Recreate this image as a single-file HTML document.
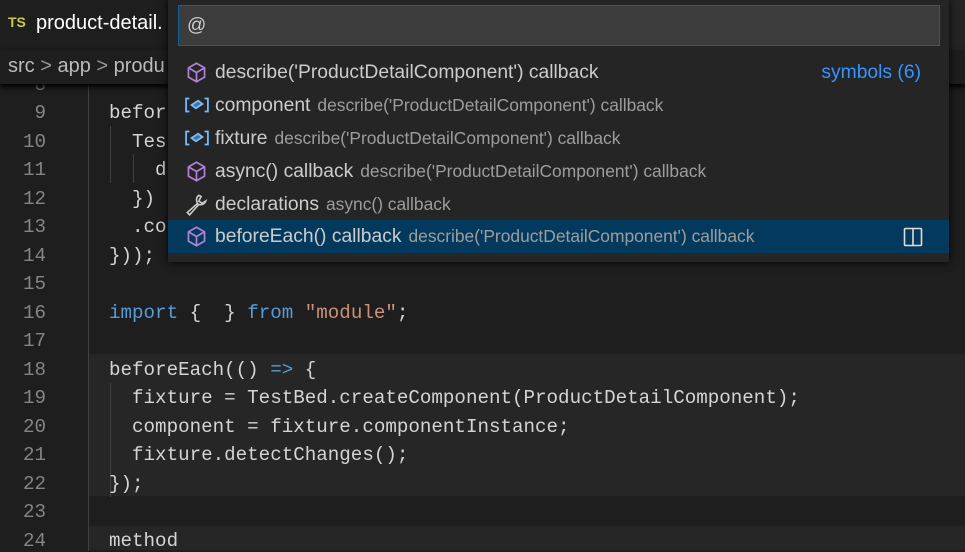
<!DOCTYPE html>
<html><head><meta charset="utf-8"><style>
*{margin:0;padding:0;box-sizing:border-box}
body{width:965px;height:550px;background:#1e1e1e;overflow:hidden;position:relative;font-family:"Liberation Sans",sans-serif}
.top{position:absolute;left:0;top:0;width:965px;height:50px;background:#252526}
.tab{position:absolute;left:0;top:0;width:175px;height:50px;background:#1e1e1e}
.ts{position:absolute;left:8px;top:14px;color:#cbcb41;font-weight:bold;font-size:14px}
.tabname{position:absolute;left:36px;top:12px;color:#fff;font-size:20px}
.bc{position:absolute;left:0;top:50px;width:965px;height:34px;background:#1e1e1e;box-shadow:0 3px 5px #000;color:#bbb;font-size:20px;padding:5px 0 0 8px;z-index:1}
.code{position:absolute;left:0;top:1px;width:965px;font-family:"Liberation Mono",monospace;font-size:19.2px;color:#d4d4d4}
.ln{position:absolute;left:0;width:46px;text-align:right;color:#858585}
.tx{position:absolute;left:109px;white-space:pre}
.cur{position:absolute;left:88px;width:877px;background:#262626}
.guide{position:absolute;left:88px;width:1px;background:#404040}
.k{color:#569cd6}.s{color:#ce9178}
.qp{position:absolute;left:168px;top:0;width:781px;height:262px;background:#252526;box-shadow:0 0 8px #000;z-index:5}
.inp{position:absolute;left:10px;top:5px;width:762px;height:41px;background:#3c3c3c;border:1px solid #0e639c;color:#ccc;font-size:19px;padding:9px 0 0 8px}
.row{position:absolute;left:0;width:781px;height:33px;font-size:19.3px;color:#ccc;line-height:33px}
.row .ic{position:absolute;left:17px;top:5px}
.row .lb{position:absolute;left:47px;white-space:nowrap}
.row .d{color:#9d9d9d;font-size:17.4px;margin-left:7px}
.sel{background:#04395e}
</style></head><body>
<div class="top"><div class="tab"><span class="ts">TS</span><span class="tabname">product-detail.</span></div></div>
<div class="bc">src <span style="color:#999">&gt;</span> app <span style="color:#999">&gt;</span> produ</div>
<div class="code">
<div class="cur" style="top:353px;height:142px"></div>
<div class="cur" style="top:525px;height:24px"></div>
<div class="guide" style="top:82px;height:468px"></div>
<div class="guide" style="left:110px;top:125px;height:57px"></div>
<div class="guide" style="left:110px;top:382px;height:114px"></div>
<div class="guide" style="left:133px;top:153px;height:29px"></div>
<div class="ln" style="top:73px">8</div>
<div class="ln" style="top:101px">9</div><div class="tx" style="top:101px">befor</div>
<div class="ln" style="top:130px">10</div><div class="tx" style="top:130px">  Tes</div>
<div class="ln" style="top:158px">11</div><div class="tx" style="top:158px">    d</div>
<div class="ln" style="top:187px">12</div><div class="tx" style="top:187px">  })</div>
<div class="ln" style="top:215px">13</div><div class="tx" style="top:215px">  .co</div>
<div class="ln" style="top:244px">14</div><div class="tx" style="top:244px">}));</div>
<div class="ln" style="top:272px">15</div>
<div class="ln" style="top:301px">16</div><div class="tx" style="top:301px"><span class="k">import</span> {  } <span class="k">from</span> <span class="s">"module"</span>;</div>
<div class="ln" style="top:329px">17</div>
<div class="ln" style="top:358px">18</div><div class="tx" style="top:358px">beforeEach(() <span class="k">=&gt;</span> {</div>
<div class="ln" style="top:386px">19</div><div class="tx" style="top:386px">  fixture = TestBed.createComponent(ProductDetailComponent);</div>
<div class="ln" style="top:415px">20</div><div class="tx" style="top:415px">  component = fixture.componentInstance;</div>
<div class="ln" style="top:443px">21</div><div class="tx" style="top:443px">  fixture.detectChanges();</div>
<div class="ln" style="top:472px">22</div><div class="tx" style="top:472px">});</div>
<div class="ln" style="top:500px">23</div>
<div class="ln" style="top:529px">24</div><div class="tx" style="top:529px">method</div>
</div>
<div class="qp">
<div class="inp">@</div>
<div class="row" style="top:56px"><svg class="ic" width="23" height="23" viewBox="0 0 20 20" fill="none" stroke="#b180d7" stroke-width="1.5"><path d="M10 2L17 6V14L10 18L3 14V6Z M3 6L10 10L17 6 M10 10V18"/></svg><span class="lb">describe('ProductDetailComponent') callback</span><span style="position:absolute;right:28px;color:#3794ff">symbols (6)</span></div>
<div class="row" style="top:89px"><svg class="ic" width="24" height="22" viewBox="0 0 22 20" fill="none" stroke="#75beff" stroke-width="1.6"><path d="M4 4H1V16H4 M18 4H21V16H18"/><path d="M6 10L12 6L16 9L10 13Z" fill="#75beff" fill-opacity=".5"/></svg><span class="lb">component<span class="d">describe('ProductDetailComponent') callback</span></span></div>
<div class="row" style="top:122px"><svg class="ic" width="24" height="22" viewBox="0 0 22 20" fill="none" stroke="#75beff" stroke-width="1.6"><path d="M4 4H1V16H4 M18 4H21V16H18"/><path d="M6 10L12 6L16 9L10 13Z" fill="#75beff" fill-opacity=".5"/></svg><span class="lb">fixture<span class="d">describe('ProductDetailComponent') callback</span></span></div>
<div class="row" style="top:155px"><svg class="ic" width="23" height="23" viewBox="0 0 20 20" fill="none" stroke="#b180d7" stroke-width="1.5"><path d="M10 2L17 6V14L10 18L3 14V6Z M3 6L10 10L17 6 M10 10V18"/></svg><span class="lb">async() callback<span class="d">describe('ProductDetailComponent') callback</span></span></div>
<div class="row" style="top:188px"><svg class="ic" width="23" height="23" viewBox="0 0 20 20" fill="none" stroke="#ccc" stroke-width="1.4"><path d="M12 2A5 5 0 0 0 11 9L2 17L4 19L12 10A5 5 0 0 0 18 7L15 9L12 7L14 3Z"/></svg><span class="lb">declarations<span class="d">async() callback</span></span></div>
<div class="row sel" style="top:220px"><svg class="ic" width="23" height="23" viewBox="0 0 20 20" fill="none" stroke="#b180d7" stroke-width="1.5"><path d="M10 2L17 6V14L10 18L3 14V6Z M3 6L10 10L17 6 M10 10V18"/></svg><span class="lb">beforeEach() callback<span class="d">describe('ProductDetailComponent') callback</span></span><svg style="position:absolute;left:735px;top:7px" width="20" height="20" viewBox="0 0 20 20" fill="none" stroke="#ddd" stroke-width="1.6"><rect x="1.5" y="1.5" width="17" height="17" rx="1"/><path d="M10 2V18"/></svg></div>
</div>
</body></html>
